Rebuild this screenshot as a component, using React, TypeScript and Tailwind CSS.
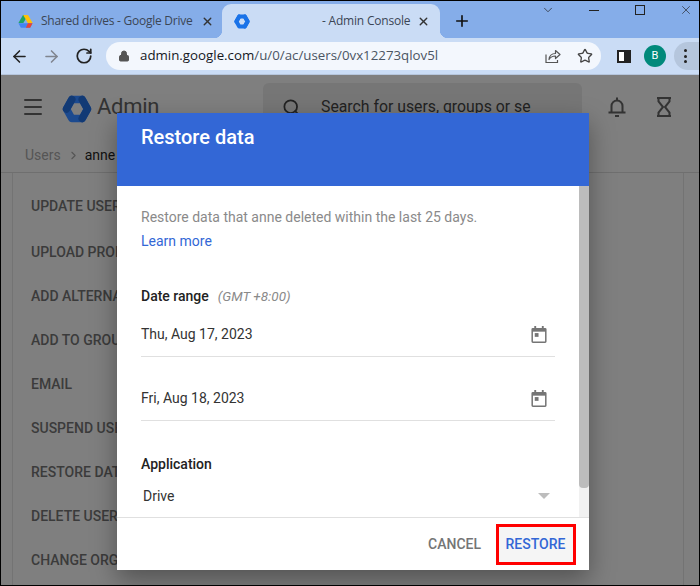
import React from "react";
import { ArrowLeft, ArrowRight, RotateCw, Lock, Star, X, Plus, ChevronDown, Menu, Search, ChevronRight } from "lucide-react";

const items: string[] = [
  "UPDATE USER",
  "UPLOAD PROFILE",
  "ADD ALTERNATE",
  "ADD TO GROUPS",
  "EMAIL",
  "SUSPEND USER",
  "RESTORE DATA",
  "DELETE USER",
  "CHANGE ORG",
];

function DriveLogo() {
  return (
    <svg width="15" height="13" viewBox="0 0 16 14" className="shrink-0">
      <path d="M5.300 0h5.400l-5 8.600H0.400z" fill="#1fa463" />
      <path d="M10.700 0l5 8.600h-5.200L5.500 0z" fill="#ffc107" />
      <path d="M0.400 9l2.600 4.600h10l2.600-4.600z" fill="#4285f4" />
      <path d="M10.600 9h5l-2.600 4.600h-4.600z" fill="#ea4335" />
    </svg>
  );
}

function AdminHex({ w, h, c1, c2 }: { w: number; h: number; c1: string; c2: string }) {
  return (
    <svg width={w} height={h} viewBox="0 0 30 28" className="shrink-0">
      <path d="M4.500 14L9.800 4.500h10.400L25.500 14l-5.300 9.500H9.800z" fill="none" stroke={c1} strokeWidth="7.500" strokeLinejoin="round" />
      <path d="M20.200 4.500L25.500 14 20.200 23.500" fill="none" stroke={c2} strokeWidth="7.500" strokeLinejoin="round" strokeLinecap="round" />
      <path d="M9.800 4.500L4.500 14" fill="none" stroke={c2} strokeWidth="7.500" strokeLinecap="round" />
    </svg>
  );
}

function Calendar() {
  return (
    <svg width="16" height="17" viewBox="0 0 16 18" className="shrink-0">
      <path d="M3 0h2v2h6V0h2v2h1.500A1.500 1.500 0 0 1 16 3.500v13a1.500 1.500 0 0 1-1.500 1.500h-13A1.500 1.500 0 0 1 0 16.500v-13A1.500 1.500 0 0 1 1.500 2H3z" fill="#757575" />
      <rect x="1.600" y="6" width="12.800" height="10.400" fill="#fff" />
      <rect x="3.500" y="7.500" width="4" height="4" fill="#757575" />
    </svg>
  );
}

function ShareIcon() {
  return (
    <svg width="16" height="16" viewBox="0 0 16 16" fill="none" stroke="#555" strokeWidth="1.200" className="shrink-0">
      <path d="M1 6.500V14.500H12.500V12" />
      <path d="M4 11.500C4.500 7.500 7.500 5.500 10.500 5.500V2.500L15 6.500 10.500 10.500V8C8 8 5.500 9 4 11.500z" strokeLinejoin="round" />
    </svg>
  );
}

function BellIcon() {
  return (
    <svg width="18" height="20" viewBox="0 0 18 20" fill="none" stroke="#333" strokeWidth="2" className="shrink-0">
      <path d="M3.500 15.500V9a5.500 5.500 0 0 1 11 0v6.500" />
      <path d="M0.500 15.500h17" />
      <path d="M9 0.500v3" />
      <path d="M7 19h4" />
    </svg>
  );
}

function HourglassIcon() {
  return (
    <svg width="14" height="20" viewBox="0 0 14 20" fill="none" stroke="#333" strokeWidth="2" className="shrink-0">
      <path d="M0 1h14M0 19h14" />
      <path d="M1.500 1v3.500L6 10l-4.500 5.500V19M12.500 1v3.500L8 10l4.500 5.500V19" />
    </svg>
  );
}

export default function App() {
  return (
    <div className="w-[700px] h-[586px] relative overflow-hidden border border-black bg-[#7f7f7f] flex flex-col text-[#3c3c3c] [font-family:Roboto,'Liberation_Sans',sans-serif]">
      {/* Tab strip */}
      <div className="h-[37px] shrink-0 bg-[#85ade9] flex items-end relative [font-family:'Open_Sans','Noto_Sans',sans-serif]">
        <div className="w-[221px] h-[34px] flex items-center pl-[17px] pr-[8px] gap-[8px] text-[#3b4656]">
          <DriveLogo />
          <span className="text-[12px] flex-1 whitespace-nowrap tracking-[-0.25px]">Shared drives - Google Drive</span>
          <X size={13} strokeWidth={2.500} className="text-[#333] shrink-0" />
        </div>
        <div className="relative w-[218px] h-[34px] bg-[#cadcf5] rounded-t-[9px] flex items-center pl-[12px] pr-[10px] text-[#3b4656] before:absolute before:bottom-0 before:left-[-8px] before:w-[8px] before:h-[8px] before:bg-[radial-gradient(circle_at_0_0,transparent_8px,#cadcf5_8.500px)] after:absolute after:bottom-0 after:right-[-8px] after:w-[8px] after:h-[8px] after:bg-[radial-gradient(circle_at_100%_0,transparent_8px,#cadcf5_8.500px)]">
          <AdminHex w={16} h={15} c1="#1a73e8" c2="#1a73e8" />
          <span className="text-[12px] ml-[72px] flex-1 whitespace-nowrap tracking-[-0.2px]">- Admin Console</span>
          <X size={13} strokeWidth={2.500} className="text-[#333] shrink-0" />
        </div>
        <Plus size={18} strokeWidth={2.200} className="text-[#111] ml-[13px] mb-[8px]" />
        <div className="absolute left-[524px] top-0 h-[18px] flex items-center text-[#222]">
          <div className="w-[46px] flex justify-center"><ChevronDown size={14} strokeWidth={1.200} /></div>
          <div className="w-[46px] flex justify-center"><div className="w-[10px] h-[1px] bg-[#222]" /></div>
          <div className="w-[46px] flex justify-center"><div className="w-[10px] h-[10px] border border-[#222]" /></div>
          <div className="w-[46px] flex justify-center"><X size={14} strokeWidth={1.100} /></div>
        </div>
      </div>
      {/* Toolbar */}
      <div className="h-[37px] shrink-0 bg-[#cadcf5] flex items-center pl-[9px] border-b border-[#b5c5dc]">
        <ArrowLeft size={19} strokeWidth={2} className="text-[#222] shrink-0" />
        <ArrowRight size={19} strokeWidth={2} className="text-[#80858f] ml-[13px] shrink-0" />
        <RotateCw size={18} strokeWidth={2.300} className="text-[#222] ml-[14px] shrink-0" />
        <div className="ml-[13px] w-[495px] h-[28px] shrink-0 rounded-full bg-[#f3f7fd] flex items-center pl-[12px] pr-[8px] [font-family:'Open_Sans','Noto_Sans',sans-serif]">
          <Lock size={12} fill="#555" strokeWidth={2} className="text-[#555] shrink-0" />
          <span className="ml-[10px] text-[13.300px] flex-1 whitespace-nowrap text-[#4b5563]"><span className="text-[#15181d]">admin.google.com</span>/u/0/ac/users/0vx12273qlov5l</span>
          <div className="mr-[16px]"><ShareIcon /></div>
          <Star size={16} strokeWidth={2} className="text-[#444] shrink-0" />
        </div>
        <div className="ml-[16px] w-[14px] h-[13px] shrink-0 border-[2px] border-[#222] bg-white flex justify-end"><div className="w-[5px] bg-[#222]" /></div>
        <div className="ml-[13px] w-[22px] h-[22px] shrink-0 rounded-full bg-[#00897b] text-white text-[11px] flex items-center justify-center">B</div>
        <div className="ml-[8px] flex-1 h-[28px] rounded-l-full bg-[#b5c6dd] flex flex-col items-center justify-center gap-[2.500px] pr-[2px]">
          <div className="w-[3px] h-[3px] rounded-full bg-[#222]" />
          <div className="w-[3px] h-[3px] rounded-full bg-[#222]" />
          <div className="w-[3px] h-[3px] rounded-full bg-[#222]" />
        </div>
      </div>
      {/* Page */}
      <div className="flex-1 flex flex-col min-h-0">
        <div className="h-[64px] shrink-0 flex items-start pl-[20px] pt-[8px] text-[#333]">
          <Menu size={24} strokeWidth={2} className="mt-[12px] shrink-0" />
          <div className="ml-[17px] mt-[12px]"><AdminHex w={30} h={28} c1="#1c4a8f" c2="#123a75" /></div>
          <span className="ml-[5px] w-[66px] mt-[10px] text-[22px] tracking-[-0.3px] leading-[28px] text-[#333]">Admin</span>
          <div className="ml-[100px] w-[319px] h-[48px] shrink-0 rounded-t-[6px] bg-[#767676] flex items-center pl-[19px]">
            <Search size={19} strokeWidth={2.200} className="text-[#222] shrink-0" />
            <span className="ml-[20px] text-[15.800px] whitespace-nowrap text-[#222]">Search for users, groups or se</span>
          </div>
          <div className="ml-[26px] mt-[14px]"><BellIcon /></div>
          <div className="ml-[31px] mt-[14px]"><HourglassIcon /></div>
        </div>
        <div className="h-[34px] shrink-0 flex items-center pl-[24px] pb-[1px] text-[14px] border-b border-[#6f6f6f]">
          <span className="text-[#555]">Users</span>
          <ChevronRight size={13} className="text-[#555] ml-[6px] mr-[5px]" />
          <span className="text-[#111]">anne</span>
        </div>
        <div className="flex-1 flex min-h-0">
          <div className="w-[12px] shrink-0 border-r border-[#737373]" />
          <div className="flex-1 pl-[18px] pt-[11px] overflow-hidden">
            {items.map((t) => (
              <div key={t} className="h-[44px] first:mb-[2px] flex items-center text-[14px] font-medium text-[#3b3b3b] whitespace-nowrap">{t}</div>
            ))}
          </div>
          <div className="w-[16px] shrink-0 border-l border-[#737373]" />
        </div>
      </div>
      {/* Dialog */}
      <div className="absolute left-[116px] top-[112px] w-[472px] h-[457px] bg-white flex flex-col shadow-[0_10px_24px_rgba(0,0,0,0.35)]">
        <div className="h-[73px] shrink-0 bg-[#3367d6] pl-[24px] pt-[11px] text-white text-[20px] font-medium leading-[26px]">Restore data</div>
        <div className="flex-1 min-h-0 flex">
          <div className="flex-1 pl-[24px] pr-[24px] flex flex-col overflow-hidden">
            <div className="mt-[21px] text-[14px] leading-[20px] text-[#8a8a8a] whitespace-nowrap">Restore data that anne deleted within the last 25 days.</div>
            <div className="mt-[4px] text-[14px] leading-[20px] text-[#3367d6]">Learn more</div>
            <div className="mt-[35px] flex items-center leading-[20px]">
              <span className="text-[14px] font-medium text-[#222]">Date range</span>
              <span className="ml-[9px] text-[13.500px] italic text-[#8a8a8a]">(GMT +8:00)</span>
            </div>
            <div className="mt-[18px] pb-[12px] flex items-center justify-between border-b border-[#e0e0e0] text-[14px] leading-[20px] text-[#333]">
              <span>Thu, Aug 17, 2023</span><span className="mr-[8px]"><Calendar /></span>
            </div>
            <div className="mt-[31px] pb-[12px] flex items-center justify-between border-b border-[#e0e0e0] text-[14px] leading-[20px] text-[#333]">
              <span>Fri, Aug 18, 2023</span><span className="mr-[8px]"><Calendar /></span>
            </div>
            <div className="mt-[33px] text-[14px] font-medium leading-[20px] text-[#222]">Application</div>
            <div className="mt-[12px] pl-[2px] flex items-center justify-between text-[14px] leading-[20px] text-[#333]">
              <span>Drive</span>
              <span className="mr-[5px] w-0 h-0 border-x-[6px] border-x-transparent border-t-[6px] border-t-[#bdbdbd]" />
            </div>
          </div>
          <div className="w-[10px] shrink-0 bg-[#f1f1f1]"><div className="h-[302px] bg-[#bcbcbc] rounded-b-[4px]" /></div>
        </div>
        <div className="h-[53px] shrink-0 border-t border-[#e0e0e0] flex items-center justify-end pr-[13px]">
          <span className="text-[14px] font-medium text-[#757575] mr-[15px]">CANCEL</span>
          <div className="w-[80px] h-[41px] border-[3px] border-[#ff0000] bg-[#f5f5f5] flex items-center justify-center pr-[1px] text-[14px] font-medium text-[#3367d6]">RESTORE</div>
        </div>
      </div>
    </div>
  );
}
